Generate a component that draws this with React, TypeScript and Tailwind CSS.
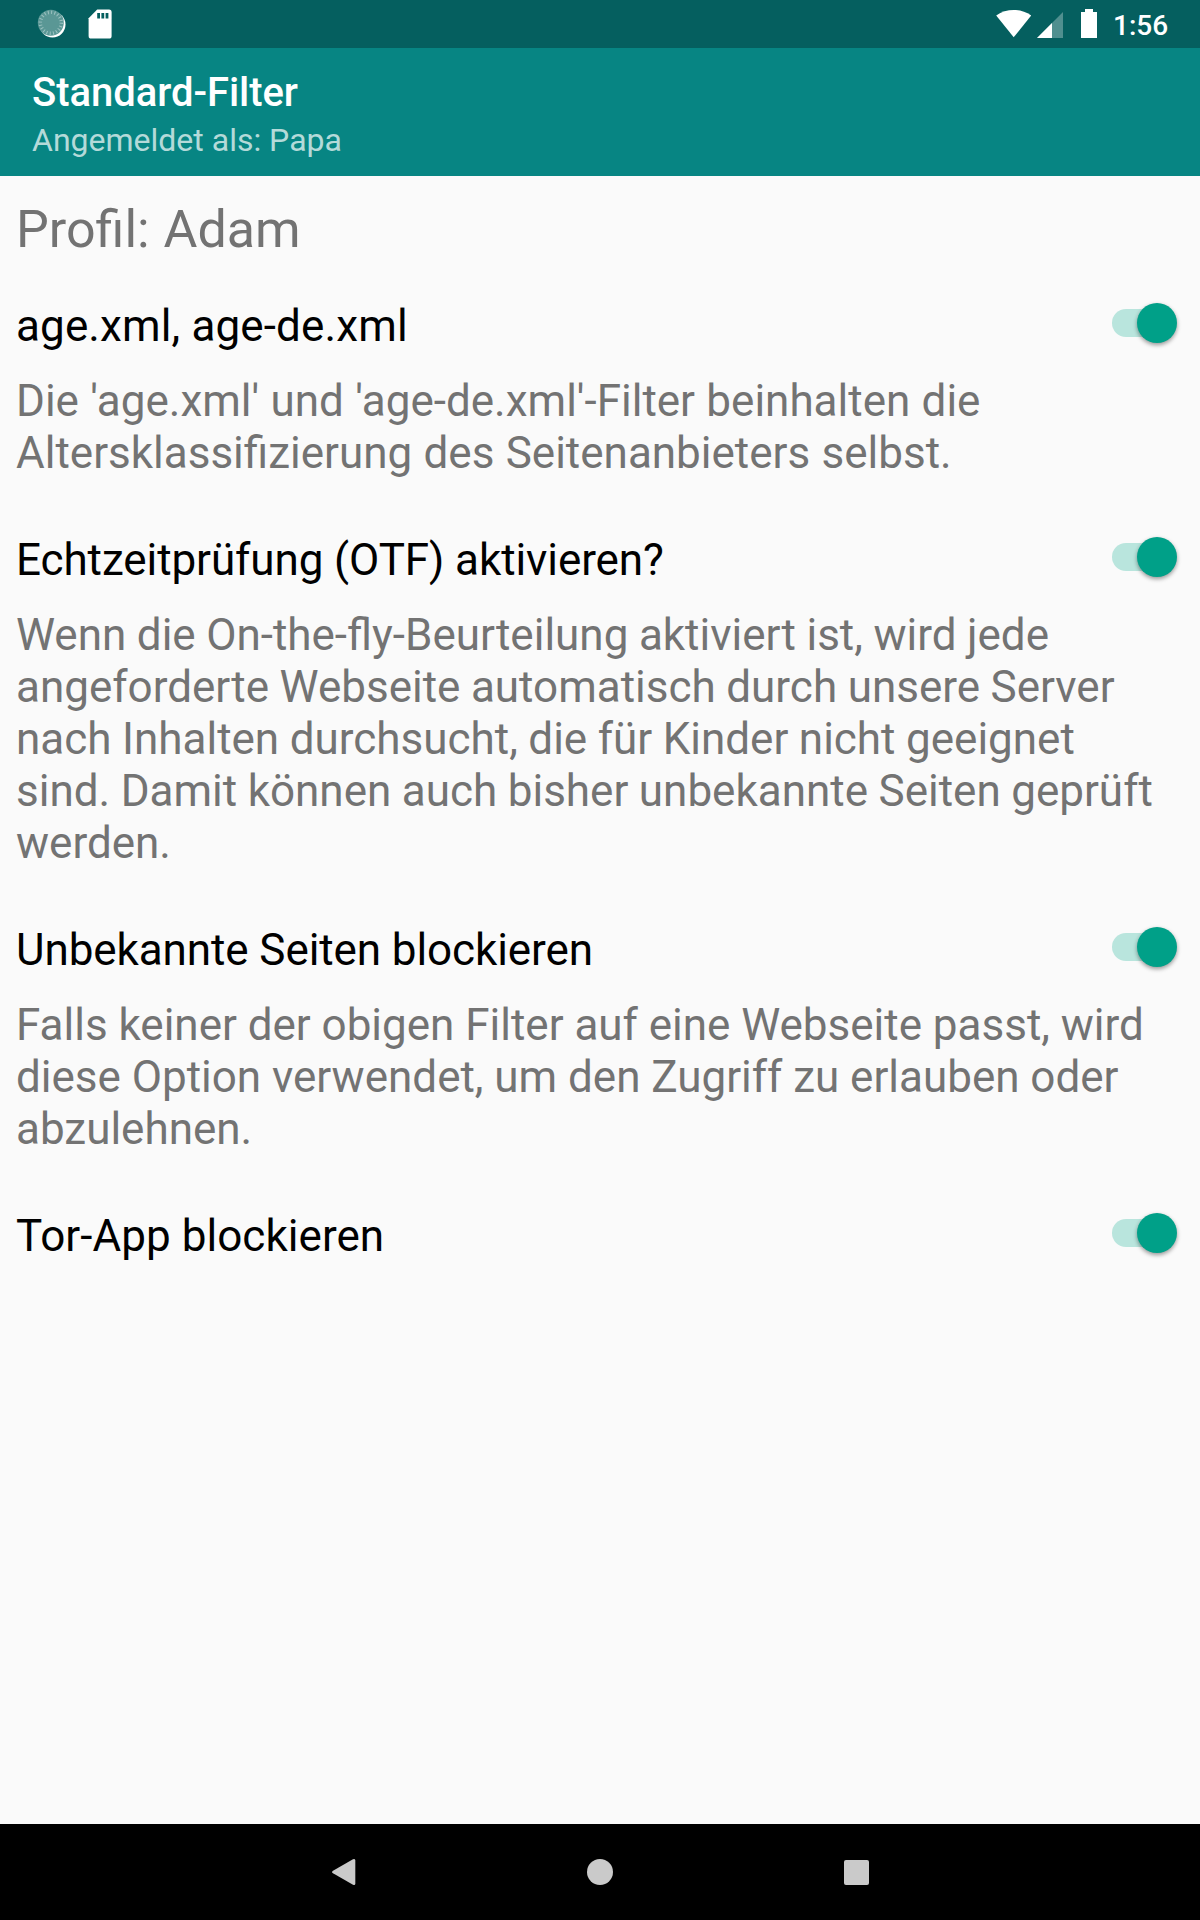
import { useState } from "react";

interface FilterOption {
  id: string;
  title: string;
  titleClass: string;
  description?: string;
  descriptionClass?: string;
}

const OPTIONS: FilterOption[] = [
  {
    id: "age",
    title: "age.xml, age-de.xml",
    titleClass: "tracking-[0.13px]",
    description:
      "Die 'age.xml' und 'age-de.xml'-Filter beinhalten die Altersklassifizierung des Seitenanbieters selbst.",
    descriptionClass: "[word-spacing:0.4px]",
  },
  {
    id: "otf",
    title: "Echtzeitprüfung (OTF) aktivieren?",
    titleClass: "tracking-[-0.09px]",
    description:
      "Wenn die On-the-fly-Beurteilung aktiviert ist, wird jede angeforderte Webseite automatisch durch unsere Server nach Inhalten durchsucht, die für Kinder nicht geeignet sind. Damit können auch bisher unbekannte Seiten geprüft werden.",
    descriptionClass: "[word-spacing:-0.4px]",
  },
  {
    id: "unknown",
    title: "Unbekannte Seiten blockieren",
    titleClass: "tracking-[-0.09px]",
    description:
      "Falls keiner der obigen Filter auf eine Webseite passt, wird diese Option verwendet, um den Zugriff zu erlauben oder abzulehnen.",
    descriptionClass: "[word-spacing:-0.1px]",
  },
  { id: "tor", title: "Tor-App blockieren", titleClass: "tracking-[0.05px]" },
];

function StatusBar() {
  return (
    <div className="h-12 shrink-0 bg-[#055f5f] flex items-center justify-between pl-9 pr-8">
      <div className="flex items-center">
        {/* sync spinner */}
        <svg width="32" height="32" viewBox="0 0 32 32">
          <circle cx="16.5" cy="16.5" r="13" fill="#fff" />
          <circle cx="14.8" cy="14.8" r="13" fill="#5a9795" />
          <circle
            cx="14.8"
            cy="14.8"
            r="10.5"
            fill="none"
            stroke="#9cc2c1"
            strokeWidth="3.5"
            strokeDasharray="1 2.3"
          />
        </svg>
        {/* sd card */}
        <svg className="ml-5" width="24" height="30" viewBox="0 0 24 30">
          <path
            d="M9.2 .6H21a2.6 2.6 0 0 1 2.6 2.6v23.8A2.6 2.6 0 0 1 21 29.6H3.2A2.6 2.6 0 0 1 .6 27V9.2z"
            fill="#fff"
          />
          <path d="M9.2 4H12v5.5H9.2zM13.4 4h2.8v5.5h-2.8zM17.6 4h2.8v5.5h-2.8z" fill="#055f5f" />
        </svg>
      </div>
      <div className="flex items-center">
        <svg width="36" height="28" viewBox="0 0 36 28">
          <path d="M17.7 27.3 .2 5.5C5.4 1.8 11.4 0 17.7 0s12.3 1.8 17.5 5.5z" fill="#fff" />
        </svg>
        <svg className="ml-1" width="28" height="28" viewBox="0 0 28 28">
          <path d="M1 28 27 2v26z" fill="#fff" fillOpacity="0.3" />
          <path d="M1 28 16 13v15z" fill="#fff" />
        </svg>
        <svg className="ml-4" width="18" height="30" viewBox="0 0 18 30">
          <path d="M5 0h8v3h4v26H1V3h4z" fill="#fff" />
        </svg>
        <span className="ml-[15px] w-[55px] pt-[3px] text-[28px] leading-8 font-medium text-white">
          1:56
        </span>
      </div>
    </div>
  );
}

interface ToggleProps {
  label: string;
  checked: boolean;
  onChange: () => void;
}

function Toggle({ label, checked, onChange }: ToggleProps) {
  return (
    <button
      type="button"
      role="switch"
      aria-checked={checked}
      aria-label={label}
      onClick={onChange}
      className={`mt-[3px] w-[65px] h-10 shrink-0 flex items-center ${
        checked ? "justify-end" : "justify-start"
      }`}
    >
      <span
        className={`h-7 w-[60px] rounded-full flex items-center ${
          checked ? "mr-[5px] justify-end bg-[#b9e5dd]" : "ml-[5px] justify-start bg-[#bdbdbd]"
        }`}
      >
        <span
          className={`w-10 h-10 shrink-0 rounded-full shadow-[0_2px_4px_rgba(0,0,0,0.4)] ${
            checked ? "-mr-[5px] bg-[#00a088]" : "-ml-[5px] bg-white"
          }`}
        />
      </span>
    </button>
  );
}

function NavBar() {
  return (
    <div className="h-24 shrink-0 bg-black flex items-center justify-center">
      <div className="w-64 flex justify-center">
        <svg width="28" height="28" viewBox="0 0 28 28">
          <path
            d="M3 12.7 23 1.3Q25.3 .3 25.3 2.5v23q0 2.2-2.3 1.2L3 15.3Q1 14 3 12.7z"
            fill="#cacaca"
          />
        </svg>
      </div>
      <div className="w-64 flex justify-center">
        <div className="w-[26px] h-[26px] rounded-full bg-[#cacaca]" />
      </div>
      <div className="w-64 flex justify-center">
        <div className="w-[25px] h-[25px] rounded-[2px] bg-[#cacaca]" />
      </div>
    </div>
  );
}

export default function App() {
  const [enabled, setEnabled] = useState<Record<string, boolean>>({
    age: true,
    otf: true,
    unknown: true,
    tor: true,
  });

  const toggle = (id: string) => {
    setEnabled((current) => ({ ...current, [id]: !current[id] }));
  };

  return (
    <div className="w-[1200px] h-[1920px] flex flex-col bg-[#fafafa] font-['Roboto',sans-serif]">
      <StatusBar />
      <header className="h-32 shrink-0 bg-[#078583] px-8 pt-[21px]">
        <h1 className="text-[40px] leading-[48px] font-medium text-white tracking-[-0.05px]">
          Standard-Filter
        </h1>
        <p className="mt-[3px] text-[32px] leading-[40px] text-[#b4dad9]">Angemeldet als: Papa</p>
      </header>
      <main className="flex-1 px-4 pt-6">
        <h2 className="text-[52px] leading-[60px] text-[#737373] [word-spacing:1px]">
          Profil: Adam
        </h2>
        <div className="mt-10 flex flex-col gap-[55px]">
          {OPTIONS.map((option) => (
            <section key={option.id}>
              <div className="h-[52px] flex items-start justify-between pr-[7px]">
                <h3 className={`text-[44px] leading-[52px] text-black ${option.titleClass}`}>
                  {option.title}
                </h3>
                <Toggle
                  label={option.title}
                  checked={enabled[option.id]}
                  onChange={() => toggle(option.id)}
                />
              </div>
              {option.description && (
                <p
                  className={`mt-[23px] pr-4 text-[44px] leading-[52px] text-[#737373] ${option.descriptionClass}`}
                >
                  {option.description}
                </p>
              )}
            </section>
          ))}
        </div>
      </main>
      <NavBar />
    </div>
  );
}
